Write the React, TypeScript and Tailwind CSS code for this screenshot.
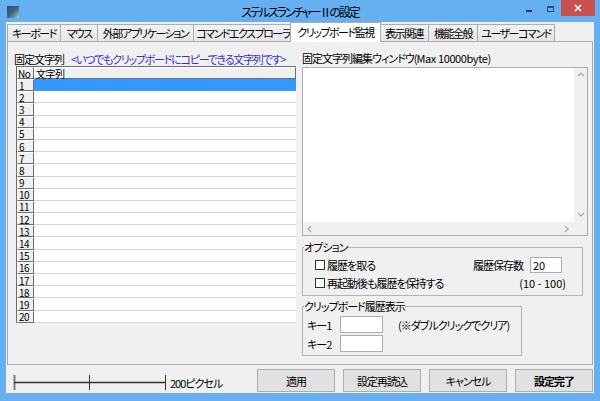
import type { ReactNode } from "react";

const tabs = [
  { label: "キーボード", w: "w-[53px]" },
  { label: "マウス", w: "w-[37px]" },
  { label: "外部アプリケーション", w: "w-[96px]" },
  { label: "コマンドエクスプローラ", w: "w-[99px]" },
  { label: "クリップボード監視", w: "w-[91px]", active: true },
  { label: "表示関連", w: "w-[49px]" },
  { label: "機能全般", w: "w-[49px]" },
  { label: "ユーザーコマンド", w: "w-[78px]", last: true },
];

const rows = Array.from({ length: 20 }, (_, i) => i + 1);

const raised =
  "border-t border-l border-r border-b border-t-white border-l-white border-r-[#6d6d6d] border-b-[#6d6d6d] bg-[#f0f0f0]";

function Chevron({ dir }: { dir: "up" | "down" | "left" | "right" }) {
  const d = {
    up: "M1 5 L4 2 L7 5",
    down: "M1 2 L4 5 L7 2",
    left: "M5 1 L2 4 L5 7",
    right: "M2 1 L5 4 L2 7",
  }[dir];
  return (
    <svg width="8" height="8" viewBox="0 0 8 8">
      <path d={d} fill="none" stroke="#a8a8a8" strokeWidth="1.2" />
    </svg>
  );
}

function CheckRow({ label }: { label: string }) {
  return (
    <div className="flex items-center">
      <span className="h-[10px] w-[10px] border border-[#333333] bg-white" />
      <span className="ml-[2px]">{label}</span>
    </div>
  );
}

function Box({ className, children }: { className: string; children?: ReactNode }) {
  return <div className={`flex items-center border border-[#abadb3] bg-white ${className}`}>{children}</div>;
}

function TitleBar() {
  return (
    <div className="grid h-[22px] shrink-0 grid-cols-[1fr_auto_1fr]">
      <div className="flex items-start pl-[7px] pt-[6px]">
        <div className="h-[12px] w-[12px] bg-linear-to-br from-[#364766] via-[#3f6482] to-[#9fd8c4]" />
      </div>
      <div className="pt-[5px] text-[12px] leading-[14px] tracking-[-2.1px]">ステルスランチャーⅡの設定</div>
      <div className="flex items-start justify-end pr-[5px]">
        <div className="flex h-[16px] w-[22px] items-center justify-center">
          <div className="mt-[6px] h-[2px] w-[6px] bg-[#1f3a5c]" />
        </div>
        <div className="flex h-[16px] w-[21px] items-center justify-center">
          <div className="mt-[2px] h-[6px] w-[7px] border border-t-2 border-[#2b4b73]" />
        </div>
        <div className="flex h-[16px] w-[34px] items-center justify-center bg-[#c75050]">
          <svg width="8" height="8" viewBox="0 0 8 8">
            <path d="M1 1 L7 7 M7 1 L1 7" stroke="white" strokeWidth="1.6" />
          </svg>
        </div>
      </div>
    </div>
  );
}

function Tabs() {
  return (
    <div className="flex h-[19px] shrink-0 items-end pl-[1px] tracking-[-1.5px]">
      {tabs.map((t) =>
        t.active ? (
          <div
            key={t.label}
            className={`relative z-10 -mx-[2px] -mb-[1px] flex h-[20px] items-center justify-center border border-b-0 border-[#acacac] bg-white pb-[1px] ${t.w}`}
          >
            {t.label}
          </div>
        ) : (
          <div
            key={t.label}
            className={`flex h-[17px] items-center justify-center border-t border-l border-[#acacac] bg-linear-to-b from-[#f2f2f2] to-[#e6e6e6] ${t.last ? "border-r" : ""} ${t.w}`}
          >
            {t.label}
          </div>
        ),
      )}
    </div>
  );
}

function FixedList() {
  return (
    <div className="flex w-[282px] flex-col">
      <div className="flex h-[15px] items-center">
        <span>固定文字列</span>
        <span className="ml-[7px] tracking-[-1.25px] text-[#3434c4]">
          &lt;いつでもクリップボードにコピーできる文字列です&gt;
        </span>
      </div>
      <div className="ml-[2px] w-[280px] border-l border-t border-[#6d6d6d] text-[10px] leading-[9px] tracking-[-0.5px]">
        <div className="flex h-[12px]">
          <div className={`flex w-[17px] items-center ${raised}`}>No</div>
          <div className={`flex flex-1 items-center pl-[1px] ${raised}`}>文字列</div>
        </div>
        {rows.map((n) => (
          <div key={n} className="flex h-[12.2px]">
            <div className={`flex w-[17px] items-center pl-[1px] ${raised}`}>{n}</div>
            <div
              className={
                n === 1 ? "flex-1 border-b border-[#3399ff] bg-[#3399ff]" : "flex-1 border-b border-[#d6d6d6] bg-white"
              }
            />
          </div>
        ))}
      </div>
    </div>
  );
}

function Editor() {
  return (
    <div className="ml-[6px] flex w-[286px] flex-col">
      <div className="flex h-[16px] items-start">
        <span>固定文字列編集ウィンドウ(</span>
        <span className="tracking-[-0.4px]">Max 10000byte)</span>
      </div>
      <div className="grid h-[169px] grid-cols-[1fr_13px] grid-rows-[1fr_13px] border border-[#abadb3] bg-white">
        <div />
        <div className="flex flex-col items-center justify-between bg-[#f0f0f0] py-[3px]">
          <Chevron dir="up" />
          <Chevron dir="down" />
        </div>
        <div className="flex items-center justify-between bg-[#f0f0f0] px-[3px]">
          <Chevron dir="left" />
          <Chevron dir="right" />
        </div>
        <div className="bg-[#f0f0f0]" />
      </div>

      <fieldset className="mt-[4px] w-[281px] border border-[#b4b4b4] pb-[3px]">
        <legend className="ml-[1px]">オプション</legend>
        <div className="mt-[2px] flex h-[18px] items-center pl-[12px] pr-[20px]">
          <CheckRow label="履歴を取る" />
          <span className="ml-auto">履歴保存数</span>
          <Box className="ml-[7px] h-[16px] w-[32px] pl-[2px] tracking-normal">20</Box>
        </div>
        <div className="flex h-[18px] items-center pl-[12px] pr-[16px]">
          <CheckRow label="再起動後も履歴を保持する" />
          <span className="ml-auto tracking-normal">(10 - 100)</span>
        </div>
      </fieldset>

      <fieldset className="mt-[3px] w-[220px] border border-[#b4b4b4] pb-[3px]">
        <legend className="ml-[1px]">クリップボード履歴表示</legend>
        <div className="mt-[3px] flex h-[17px] items-center pl-[4px]">
          <span className="w-[33px]">キー1</span>
          <Box className="h-[17px] w-[43px]" />
          <span className="ml-[15px]">(※ダブルクリックでクリア)</span>
        </div>
        <div className="mt-[2px] flex h-[17px] items-center pl-[4px]">
          <span className="w-[33px]">キー2</span>
          <Box className="h-[17px] w-[43px]" />
        </div>
      </fieldset>
    </div>
  );
}

function Footer() {
  const buttons = ["適用", "設定再読込", "キャンセル", "設定完了"];
  return (
    <div className="flex flex-1 items-start pt-[4px]">
      <div className="mt-[6px] flex items-center">
        <svg width="154" height="15" className="ml-[7px]">
          <line x1="1.5" y1="0" x2="1.5" y2="15" stroke="#7a7a7a" strokeWidth="2" />
          <line x1="1" y1="7.5" x2="152" y2="7.5" stroke="#333333" strokeWidth="1.6" />
          <line x1="76.5" y1="0" x2="76.5" y2="15" stroke="#333333" strokeWidth="1" />
          <line x1="152.5" y1="0" x2="152.5" y2="15" stroke="#333333" strokeWidth="1" />
        </svg>
        <span className="ml-[3px]">200ピクセル</span>
      </div>
      <div className="ml-auto mr-[1px] flex gap-[8px]">
        {buttons.map((b, i) => (
          <button
            key={b}
            className={`h-[23px] w-[78px] border border-[#adadad] bg-[#e1e1e1] ${i === 3 ? "font-bold" : ""}`}
          >
            {b}
          </button>
        ))}
      </div>
    </div>
  );
}

export default function App() {
  return (
    <div className="flex h-[401px] w-[600px] flex-col overflow-hidden whitespace-nowrap bg-[#66aff0] font-['Noto_Sans_CJK_JP',sans-serif] text-[11px] leading-[14px] tracking-[-1px] text-black [font-feature-settings:'palt']">
      <TitleBar />
      <div className="mx-[6px] mb-[8px] flex flex-1 flex-col bg-[#f0f0f0]">
        <Tabs />
        <div className="mx-[1px] flex h-[324px] shrink-0 border border-[#acacac] bg-[#f0f0f0] pl-[6px] pt-[9px]">
          <FixedList />
          <Editor />
        </div>
        <Footer />
      </div>
    </div>
  );
}
